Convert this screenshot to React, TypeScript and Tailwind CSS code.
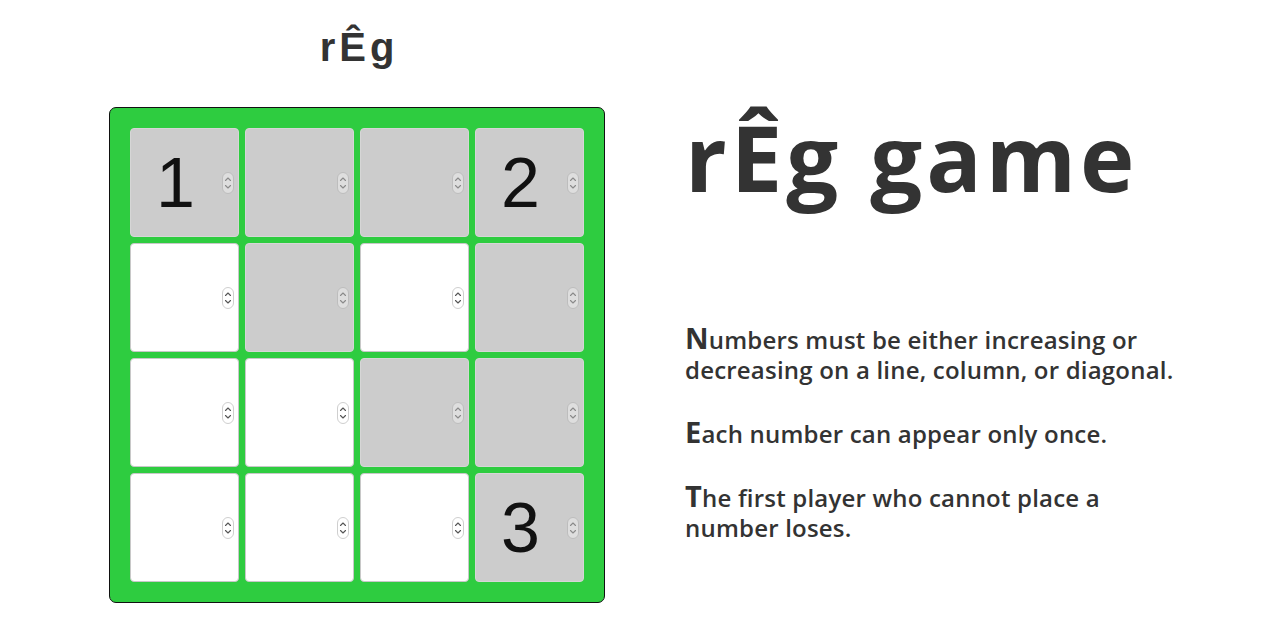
import React, { useState } from 'react';

// 0 = white cell, 1 = grey cell
const shade = [
    [1, 1, 1, 1],
    [0, 1, 0, 1],
    [0, 0, 1, 1],
    [0, 0, 0, 1],
];

const start = [
    ['1', '', '', '2'],
    ['', '', '', ''],
    ['', '', '', ''],
    ['', '', '', '3'],
];

const Spinner: React.FC<{ grey: boolean }> = ({ grey }) => (
    <div className={`absolute right-[4px] top-1/2 -translate-y-1/2 w-[12px] h-[22px] rounded-full border ${grey ? 'border-[#bdbdbd] bg-[#dedede]' : 'border-[#cfcfcf] bg-white'} flex items-center justify-center`}>
        <svg width="8" height="16" viewBox="0 0 8 16" fill="none" stroke={grey ? '#8a8a8a' : '#555'} strokeWidth="1.1" strokeLinecap="round" strokeLinejoin="round">
            <path d="M1.5 5.5 L4 3 L6.5 5.5" />
            <path d="M1.5 10.5 L4 13 L6.5 10.5" />
        </svg>
    </div>
);

const Cell: React.FC<{ grey: boolean; value: string; onChange: (v: string) => void }> = ({ grey, value, onChange }) => (
    <div className={`relative w-[109px] h-[109px] rounded-[4px] border ${grey ? 'bg-[#cccccc] border-[#d6d6d6]' : 'bg-white border-[#c8c8c8]'}`}>
        <input
            type="text"
            value={value}
            onChange={(e) => onChange(e.target.value)}
            className="w-full h-full bg-transparent pr-[18px] text-center text-[70px] leading-none text-[#111] outline-none font-['Liberation_Sans',Arial,sans-serif]"
        />
        <Spinner grey={grey} />
    </div>
);

export default function App() {
    const [grid, setGrid] = useState(start);

    const setCell = (r: number, c: number, v: string) => {
        const next = grid.map((row) => [...row]);
        next[r][c] = v;
        setGrid(next);
    };

    return (
        <div className="w-[1280px] h-[640px] bg-white flex justify-center gap-[80px]">
            <div className="flex flex-col items-center">
                <h1 className="mt-[17px] h-[60px] pl-[4px] text-[40px] font-bold tracking-[4px] text-[#333] font-['Liberation_Sans',Arial,sans-serif] leading-[60px]">rÊg</h1>
                <div className="mt-[30px] p-[20px] bg-[#2ecc40] border border-[#111] rounded-[7px] grid grid-cols-4 gap-[6px]">
                    {grid.map((row, r) =>
                        row.map((v, c) => (
                            <Cell key={`${r}-${c}`} grey={shade[r][c] === 1} value={v} onChange={(val) => setCell(r, c, val)} />
                        ))
                    )}
                </div>
            </div>
            <div className="w-[486px] text-[#333] font-['Open_Sans',sans-serif]">
                <h2 className="mt-[92px] text-[92px] font-bold leading-[130px] tracking-[4px] whitespace-nowrap">rÊg game</h2>
                <div className="mt-[101px] text-[24px] font-semibold leading-[30px] tracking-[0.2px] flex flex-col gap-[32px] whitespace-nowrap">
                    <p className="first-letter:text-[29px] first-letter:font-bold">Numbers must be either increasing or<br />decreasing on a line, column, or diagonal.</p>
                    <p className="first-letter:text-[29px] first-letter:font-bold">Each number can appear only once.</p>
                    <p className="first-letter:text-[29px] first-letter:font-bold">The first player who cannot place a<br />number loses.</p>
                </div>
            </div>
        </div>
    );
}
